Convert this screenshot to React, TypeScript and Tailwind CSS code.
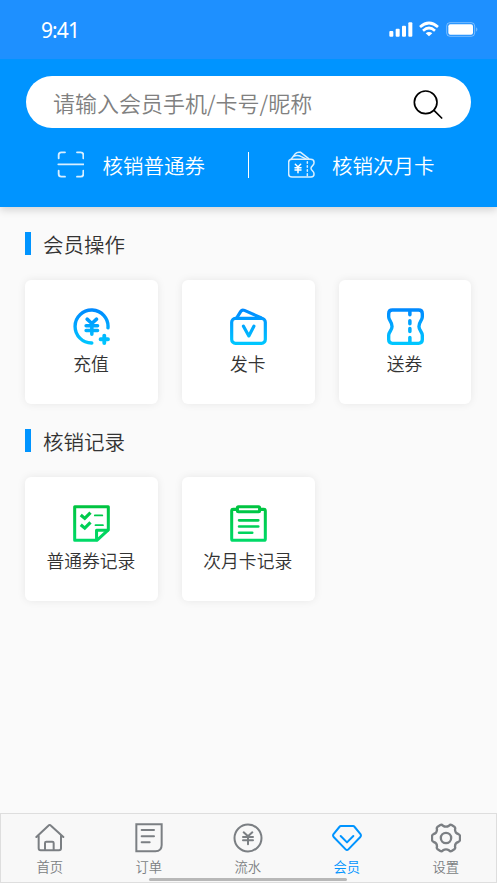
import React from "react";
import type { ReactNode } from "react";

const RechargeIcon = () => (
  <svg className="h-[37px] w-[37px]" viewBox="-1 -1 110 110" fill="none" stroke="url(#blue)" strokeWidth="10" strokeLinecap="round" strokeLinejoin="round">
    <path d="M103 58A49 49 0 1 0 55 103" />
    <path d="M41 32L55 45L69 32M38 52H72M38 66H72M55 46V77" strokeWidth="10.5" />
    <path d="M81 92H103M92 81V103" strokeWidth="11.5" />
  </svg>
);

const CardIcon = () => (
  <svg className="h-[37px] w-[37px]" viewBox="-1 -1 110 110" fill="none" stroke="url(#blue)" strokeWidth="9.5" strokeLinecap="round" strokeLinejoin="round">
    <rect x="4" y="30" width="100" height="74" rx="11" />
    <path d="M20 27L31 9Q35 3 42 6L91 28" />
    <path d="M39 53L55 82L70 53" />
  </svg>
);

const TicketIcon = () => (
  <svg className="h-[37px] w-[37px]" viewBox="-1 -1 110 110" fill="none" stroke="url(#blue)" strokeWidth="10" strokeLinecap="round" strokeLinejoin="round">
    <path d="M15 5H93Q104 5 104 16V26C104 36 94 40 94 54C94 66 104 70 104 80V93Q104 104 93 104H15Q4 104 4 93V80C4 70 14 66 14 54C14 40 4 36 4 26V16Q4 5 15 5Z" />
    <path d="M67 7V19M67 37V46M67 60V69M67 87V102" strokeWidth="10.5" />
  </svg>
);

const CouponLogIcon = () => (
  <svg className="h-[37px] w-[37px]" viewBox="-1 -1 110 110" fill="none" stroke="url(#green)" strokeWidth="9" strokeLinecap="round" strokeLinejoin="round">
    <path d="M4 4H104V73L70 104H4Z" />
    <path d="M69 102V74H102" />
    <path d="M22 29L34 39L51 22M22 58L34 68L51 51" strokeLinecap="butt" strokeLinejoin="miter" strokeWidth="9.5" />
    <path d="M64 30H86M66 59H88" strokeWidth="5.5" />
  </svg>
);

const CardLogIcon = () => (
  <svg className="h-[37px] w-[37px]" viewBox="-1 -1 110 110" fill="none" stroke="url(#green)" strokeWidth="9" strokeLinecap="round" strokeLinejoin="round">
    <path d="M20 12H8Q4 12 4 16V100Q4 104 8 104H100Q104 104 104 100V16Q104 12 100 12H88" />
    <rect x="21" y="4" width="66" height="15" rx="3" />
    <path d="M26 44.5H83M26 63H83M26 81.5H65" strokeWidth="8" />
  </svg>
);

const HomeIcon = () => (
  <svg className="h-[30px] w-[30px]" viewBox="0 0 90 90" fill="none" stroke="currentColor" strokeWidth="6" strokeLinecap="round" strokeLinejoin="round">
    <path d="M4 42L40 8Q44 4 48 8L85 42M11 38V76Q11 82 17 82H72Q78 82 78 76V38" />
    <path d="M30 81V60Q30 56 34 56H52Q56 56 56 60V81" />
  </svg>
);

const OrderIcon = () => (
  <svg className="h-[30px] w-[30px]" viewBox="0 0 90 90" fill="none" stroke="currentColor" strokeWidth="6" strokeLinecap="round" strokeLinejoin="miter">
    <path d="M7 4H83V66Q83 85 64 85H7Z" />
    <path d="M23 21H60M23 40H60M23 58H47" />
  </svg>
);

const FlowIcon = () => (
  <svg className="h-[30px] w-[30px]" viewBox="0 0 90 90" fill="none" stroke="currentColor" strokeWidth="6" strokeLinecap="round" strokeLinejoin="round">
    <circle cx="45" cy="45" r="40.5" />
    <path d="M32 28L45 40L58 28M30 42H60M30 52H60M45 40V64" />
  </svg>
);

const MemberIcon = () => (
  <svg className="h-[30px] w-[30px]" viewBox="0 0 90 90" fill="none" stroke="currentColor" strokeWidth="6" strokeLinecap="round" strokeLinejoin="round">
    <path d="M27 9H63Q66 9 68 12L86 34Q88 38 85 42L49 79Q45 83 41 79L5 42Q2 38 4 34L22 12Q24 9 27 9Z" />
    <path d="M26 39L45 58L64 39" />
  </svg>
);

const GearIcon = () => (
  <svg className="h-[30px] w-[30px]" viewBox="0 0 90 90" fill="none" stroke="currentColor" strokeWidth="7" strokeLinecap="round" strokeLinejoin="round">
    <path d="M28 6Q32 4 36 8Q45 14 54 8Q58 4 62 6L70 11Q74 14 72 19Q72 31 82 33Q87 35 87 40V50Q87 55 82 57Q72 59 72 71Q74 76 70 79L62 84Q58 86 54 82Q45 76 36 82Q32 86 28 84L20 79Q16 76 18 71Q18 59 8 57Q3 55 3 50V40Q3 35 8 33Q18 31 18 19Q16 14 20 11Z" />
    <circle cx="45" cy="45" r="15.5" />
  </svg>
);

const SectionTitle = ({ children }: { children: ReactNode }) => (
  <div className="flex h-6 items-center gap-3">
    <span className="h-[23px] w-1.5 bg-[#0094ff]" />
    <h2 className="pt-0.5 text-[20.5px] font-[350] leading-6">{children}</h2>
  </div>
);

const ActionCard = ({ icon, label }: { icon: ReactNode; label: string }) => (
  <button className="flex h-[124px] flex-col items-center rounded-md bg-white pt-7 shadow-[0_0_9px_rgba(0,0,0,0.08)]">
    {icon}
    <span className="mr-px mt-1.5 text-[17.8px] font-[350] leading-6">{label}</span>
  </button>
);

const tabs = [
  { label: "首页", icon: <HomeIcon /> },
  { label: "订单", icon: <OrderIcon /> },
  { label: "流水", icon: <FlowIcon /> },
  { label: "会员", icon: <MemberIcon />, active: true },
  { label: "设置", icon: <GearIcon /> },
];

export default function App() {
  return (
    <div className="relative flex h-[883px] w-[497px] flex-col overflow-hidden bg-[#fafafa] font-['Noto_Sans_CJK_SC',sans-serif] text-[#333]">
      {/* shared icon gradients */}
      <svg className="absolute h-0 w-0">
        <defs>
          <linearGradient id="blue" gradientUnits="userSpaceOnUse" x1="0" y1="0" x2="0" y2="108">
            <stop stopColor="#0088ff" />
            <stop offset="1" stopColor="#00c8ff" />
          </linearGradient>
          <linearGradient id="green" gradientUnits="userSpaceOnUse" x1="0" y1="0" x2="0" y2="108">
            <stop stopColor="#00c33f" />
            <stop offset="1" stopColor="#00da68" />
          </linearGradient>
        </defs>
      </svg>

      <header className="h-[207px] shrink-0 bg-[#0094ff] text-white shadow-[0_3px_8px_rgba(0,0,0,0.16)]">
        <div className="flex h-[58.5px] items-center justify-between bg-[#1e90ff] pl-[41px] pr-[18px]">
          <span className="pt-0.5 font-['Noto_Sans',sans-serif] text-[21px] leading-6 tracking-[-0.9px]">9:41</span>
          <svg className="h-4 w-[90px]" viewBox="2 -1 270 48" fill="white">
            <rect x="3" y="29" width="12" height="17" rx="3" />
            <rect x="22" y="22" width="12" height="24" rx="3" />
            <rect x="41" y="13" width="12" height="33" rx="3" />
            <rect x="60" y="3" width="12" height="43" rx="3" />
            <g fill="none" stroke="white" strokeWidth="8">
              <path d="M95 17Q122 -7 149 17" />
              <path d="M104 28Q122 12 140 28" />
            </g>
            <path d="M112 36Q122 28 132 36L122 45Z" />
            <rect x="175" y="4" width="84" height="41" rx="10" fill="none" stroke="white" strokeOpacity=".4" strokeWidth="3" />
            <rect x="180" y="9" width="74" height="31" rx="6" />
            <path d="M264 18Q270 24 264 31Z" fillOpacity=".5" />
          </svg>
        </div>
        <div className="px-[26px] pt-[17.5px]">
          <div className="flex h-[52px] w-[444.5px] items-center justify-between rounded-full bg-white pl-[27px] pr-7">
            <span className="text-[22px] font-[350] leading-8 text-[#808080]">请输入会员手机/卡号/昵称</span>
            <svg className="mt-1 h-[30px] w-[30px]" viewBox="0 -2 90 90" fill="none" stroke="black" strokeWidth="5" strokeLinecap="round">
              <circle cx="38" cy="38" r="34" />
              <path d="M63 62L86 85" />
            </svg>
          </div>
        </div>
        <div className="mt-[23px] flex h-[27px] items-center pl-[57px] text-[20.5px] font-[350] leading-6">
          <button className="flex items-center">
            <svg className="h-[27px] w-[27px]" viewBox="0 0 81 81" fill="none" stroke="#d9efff" strokeWidth="5.5" strokeLinecap="round">
              <path d="M5 22V12Q5 4 13 4H24M60 4H71Q79 4 79 12V22M79 59V69Q79 77 71 77H60M24 77H13Q5 77 5 69V59M4 40H80" />
            </svg>
            <span className="ml-[18.5px]">核销普通券</span>
          </button>
          <span className="ml-[42.5px] h-[26px] w-[1.5px] bg-white" />
          <button className="ml-[38.5px] flex items-center">
            <svg className="h-[27px] w-[27px]" viewBox="0 0 81 81" fill="none" stroke="#d9efff" strokeWidth="4.5" strokeLinecap="round" strokeLinejoin="round">
              <path d="M12 25H68Q78 25 78 34V36C78 44 69 45 69 52C69 59 78 60 78 68V70Q78 78 69 78H12Q2 78 2 69V34Q2 25 12 25Z" />
              <path d="M10 24L22 8Q27 2 38 4L62 23M17 16Q28 10 40 17L54 24" />
              <path d="M58 32V37M58 44V49M58 56V61M58 68V74" />
              <path d="M22 40L30 48L38 40M21 50H39M21 57H39M30 48V65" stroke="white" />
            </svg>
            <span className="ml-[17.5px]">核销次月卡</span>
          </button>
        </div>
      </header>

      <main className="flex-1 px-[25px] pt-6">
        <SectionTitle>会员操作</SectionTitle>
        <div className="mt-[25px] grid w-[446.5px] grid-cols-3 gap-6">
          <ActionCard icon={<RechargeIcon />} label="充值" />
          <ActionCard icon={<CardIcon />} label="发卡" />
          <ActionCard icon={<TicketIcon />} label="送券" />
        </div>
        <div className="mt-6">
          <SectionTitle>核销记录</SectionTitle>
        </div>
        <div className="mt-[25px] grid w-[446.5px] grid-cols-3 gap-6">
          <ActionCard icon={<CouponLogIcon />} label="普通券记录" />
          <ActionCard icon={<CardLogIcon />} label="次月卡记录" />
        </div>
      </main>

      <nav className="relative grid h-[70px] shrink-0 grid-cols-5 border border-[#dedede] bg-[#f8f8f8]">
        {tabs.map((tab) => (
          <button key={tab.label} className={`flex flex-col items-center pr-[1.4px] pt-[9px] ${tab.active ? "text-[#0094ff]" : "text-[#7b7f83]"}`}>
            {tab.icon}
            <span className="mt-[3.5px] text-[13.3px] font-[350] leading-5">{tab.label}</span>
          </button>
        ))}
        {/* home indicator sits over the tab bar */}
        <span className="absolute bottom-px left-[148px] h-[3.5px] w-[198px] rounded-full bg-[#b8b8b8]" />
      </nav>
    </div>
  );
}
